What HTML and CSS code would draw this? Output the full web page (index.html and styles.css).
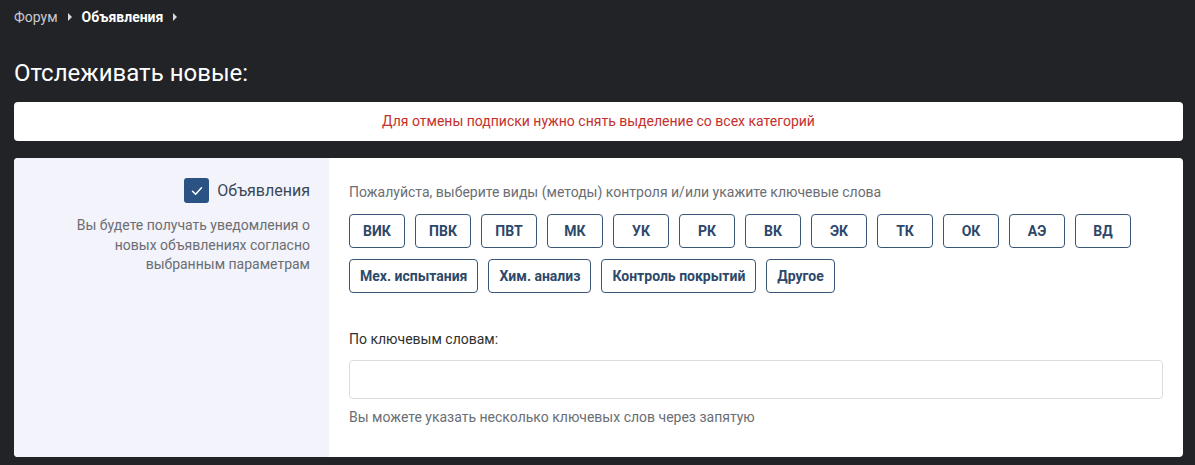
FILE: index.html
```html
<!DOCTYPE html>
<html lang="ru">
<head>
<meta charset="utf-8">
<link rel="stylesheet" href="styles.css">
</head>
<body>
<div class="page">
  <nav class="crumbs">
    <a class="crumb">Форум</a>
    <span class="caret"></span>
    <a class="crumb current">Объявления</a>
    <span class="caret"></span>
  </nav>
  <h1 class="title">Отслеживать новые:</h1>
  <div class="notice">Для отмены подписки нужно снять выделение со всех категорий</div>
  <div class="card">
    <div class="side">
      <label class="check">
        <span class="box"><svg width="12" height="10" viewBox="0 0 12 10"><path d="M1.5 5.2 L4.6 8.2 L10.5 1.8" fill="none" stroke="#fff" stroke-width="1.5" stroke-linecap="round" stroke-linejoin="round"/></svg></span>
        <span class="check-label">Объявления</span>
      </label>
      <p class="desc">Вы будете получать уведомления о новых объявлениях согласно выбранным параметрам</p>
    </div>
    <div class="main">
      <p class="hint">Пожалуйста, выберите виды (методы) контроля и/или укажите ключевые слова</p>
      <div class="tags">
        <button class="tag">ВИК</button>
        <button class="tag">ПВК</button>
        <button class="tag">ПВТ</button>
        <button class="tag">МК</button>
        <button class="tag">УК</button>
        <button class="tag">РК</button>
        <button class="tag">ВК</button>
        <button class="tag">ЭК</button>
        <button class="tag">ТК</button>
        <button class="tag">ОК</button>
        <button class="tag">АЭ</button>
        <button class="tag">ВД</button>
        <button class="tag">Мех. испытания</button>
        <button class="tag">Хим. анализ</button>
        <button class="tag">Контроль покрытий</button>
        <button class="tag">Другое</button>
      </div>
      <label class="field-label">По ключевым словам:</label>
      <input class="field" type="text">
      <p class="help">Вы можете указать несколько ключевых слов через запятую</p>
    </div>
  </div>
</div>
</body>
</html>
```

FILE: styles.css
```css
html, body {
  margin: 0;
  padding: 0;
  background: #222327;
  font-family: Roboto, "Noto Sans", sans-serif;
}
.page {
  padding: 0 12px 0 14px;
}
.crumbs {
  display: flex;
  align-items: center;
  height: 34px;
  font-size: 14px;
}
.crumb {
  color: #c9cacf;
}
.crumb.current {
  color: #ffffff;
  font-weight: 700;
}
.caret {
  width: 0;
  height: 0;
  border-top: 4px solid transparent;
  border-bottom: 4px solid transparent;
  border-left: 4px solid #d8d9dc;
  margin: 0 10px 0 10px;
}
.title {
  margin: 24px 0 0;
  font-size: 24px;
  font-weight: 400;
  color: #ffffff;
  line-height: 30px;
}
.notice {
  margin-top: 14px;
  background: #fff;
  border-radius: 4px;
  height: 39px;
  padding-bottom: 1px;
  box-sizing: border-box;
  display: flex;
  align-items: center;
  justify-content: center;
  color: #c4302b;
  font-size: 14px;
}
.card {
  margin-top: 17px;
  display: flex;
  background: #fff;
  border-radius: 4px;
  overflow: hidden;
  height: 299px;
}
.side {
  width: 315px;
  flex: none;
  background: #f2f3fb;
  padding: 20px 19px 0 20px;
  box-sizing: border-box;
  display: flex;
  flex-direction: column;
  align-items: flex-end;
}
.check {
  display: flex;
  align-items: center;
  gap: 8px;
}
.box {
  width: 25px;
  height: 25px;
  border-radius: 3px;
  background: #2a5282;
  display: flex;
  align-items: center;
  justify-content: center;
}
.check-label {
  font-size: 16px;
  color: #3b4756;
}
.desc {
  margin: 13px 0 0;
  text-align: right;
  font-size: 14px;
  line-height: 19.5px;
  color: #6b6e73;
  width: 250px;
}
.main {
  flex: 1;
  padding: 25px 20px 0 20px;
}
.hint {
  margin: 0;
  font-size: 14px;
  line-height: 18px;
  color: #6b6e73;
}
.tags {
  margin-top: 13px;
  display: flex;
  flex-wrap: wrap;
  gap: 11px 10px;
  width: 800px;
}
.tag {
  min-width: 56px;
  height: 34px;
  padding: 0 10px;
  background: #fff;
  border: 1px solid #3a5677;
  border-radius: 4px;
  font-family: Roboto, "Noto Sans", sans-serif;
  font-size: 14px;
  font-weight: 700;
  color: #2d4869;
}
.field-label {
  display: block;
  margin-top: 37px;
  font-size: 14px;
  line-height: 18px;
  color: #2e3033;
}
.field {
  display: block;
  margin-top: 12px;
  width: 100%;
  height: 39px;
  box-sizing: border-box;
  border: 1px solid #dcdcdc;
  border-radius: 4px;
  outline: none;
}
.help {
  margin: 9px 0 0;
  font-size: 14px;
  line-height: 18px;
  color: #6b6e73;
}
```
